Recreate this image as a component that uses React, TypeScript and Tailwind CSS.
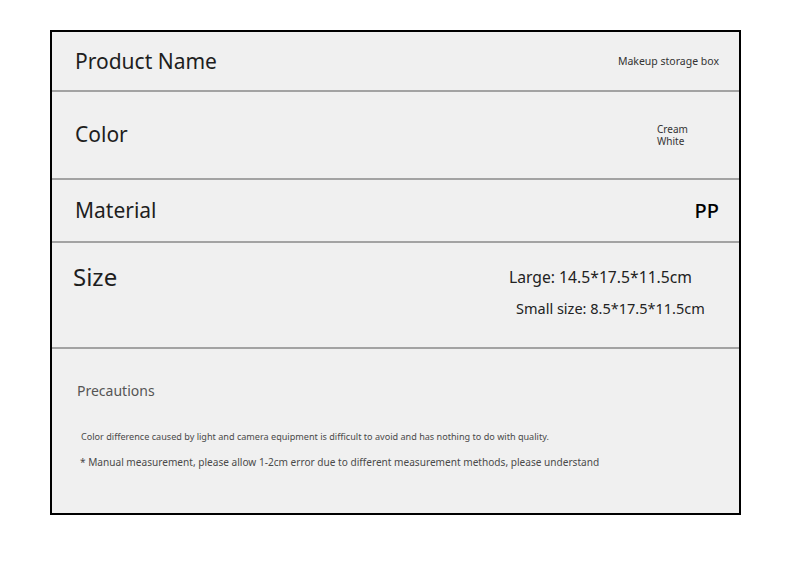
export default function App() {
  return (
    <div className="w-[790px] h-[568px] bg-white pt-[30px] pl-[50px] font-['Noto_Sans',sans-serif]">
      <div className="w-[691px] h-[485px] border-2 border-black bg-[#f0f0f0] flex flex-col">
        <div className="h-[60px] flex items-center border-b-2 border-[#a3a3a3] pl-[23px] pr-[20px] pt-[2px]">
          <span className="text-[21px] text-[#1e1e1e]">Product Name</span>
          <span className="ml-auto text-[10.5px] text-[#333]">Makeup storage box</span>
        </div>

        <div className="h-[88px] flex items-center border-b-2 border-[#a3a3a3] pl-[23px]">
          <span className="text-[21px] text-[#1e1e1e]">Color</span>
          <span className="ml-auto w-[82px] text-[10px] leading-[12px] text-[#333]">
            Cream
            <br />
            White
          </span>
        </div>

        <div className="h-[63px] flex items-center border-b-2 border-[#a3a3a3] pl-[23px] pr-[20px]">
          <span className="text-[21px] text-[#1e1e1e]">Material</span>
          <span className="ml-auto text-[20px] font-medium text-black">PP</span>
        </div>

        <div className="h-[106px] flex border-b-2 border-[#a3a3a3] pl-[21px]">
          <span className="mt-[19px] text-[24px] leading-[30px] text-[#1e1e1e]">Size</span>
          <div className="ml-auto w-[230px] flex flex-col pt-[23px]">
            <span className="text-[15.7px] leading-[22px] text-[#222]">Large: 14.5*17.5*11.5cm</span>
            <span className="pl-[7px] mt-[10px] text-[14.5px] leading-[20px] text-[#222]">
              Small size: 8.5*17.5*11.5cm
            </span>
          </div>
        </div>

        <div className="flex-1 flex flex-col pl-[25px] pt-[32px] text-[#555]">
          <span className="text-[14px] leading-[20px]">Precautions</span>
          <span className="pl-[4px] mt-[29px] text-[9.1px] leading-[14px] text-[#4a4a4a]">
            Color difference caused by light and camera equipment is difficult to avoid and has nothing to do with quality.
          </span>
          <span className="pl-[3px] mt-[10px] text-[10.1px] leading-[16px] text-[#4a4a4a]">
            * Manual measurement, please allow 1-2cm error due to different measurement methods, please understand
          </span>
        </div>
      </div>
    </div>
  );
}
